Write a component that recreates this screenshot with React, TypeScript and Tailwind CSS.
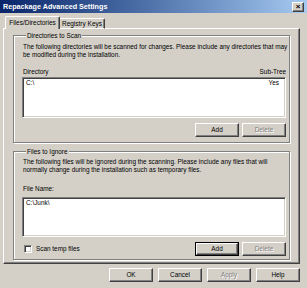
const raised =
  "border border-t-white border-l-white border-r-[#404040] border-b-[#404040] shadow-[inset_-1px_-1px_0_#808080]";
const sunken =
  "border border-t-[#808080] border-l-[#808080] border-b-white border-r-white shadow-[inset_1px_1px_0_#404040,inset_-1px_-1px_0_#d4d0c8]";

const Button = ({
  label,
  disabled,
  isDefault,
  className = "",
}: {
  label: string;
  disabled?: boolean;
  isDefault?: boolean;
  className?: string;
}) => {
  if (isDefault) {
    return (
      <div className={`border border-black ${className}`}>
        <div className={`h-full flex items-center justify-center ${raised}`}>
          {label}
        </div>
      </div>
    );
  }
  return (
    <div
      className={`flex items-center justify-center ${raised} ${
        disabled ? "text-[#808080] [text-shadow:1px_1px_0_#fff]" : "text-black"
      } ${className}`}
    >
      {label}
    </div>
  );
};

// etched group frame, caption sits on the top line
const GroupBox = ({
  title,
  children,
  className = "",
}: {
  title: string;
  children: React.ReactNode;
  className?: string;
}) => (
  <div
    className={`border border-[#808080] shadow-[1px_1px_0_#fff,inset_1px_1px_0_#fff] pl-[8px] pr-[3px] ${className}`}
  >
    <div className="-mt-[4px] ml-[4px] px-[1px] w-fit bg-[#d4d0c8] leading-[7px]">
      {title}
    </div>
    {children}
  </div>
);

export default function App() {
  return (
    <div
      className="w-[307px] h-[288px] bg-[#d4d0c8] flex flex-col overflow-hidden text-[6.4px] leading-[8px] text-black"
      style={{ fontFamily: '"Liberation Sans", Arial, sans-serif' }}
    >
      {/* title bar */}
      <div className="h-[13px] shrink-0 flex items-center justify-between bg-gradient-to-r from-[#0a246a] to-[#a6caf0] pl-[3px] pr-[3px]">
        <span className="text-white font-bold text-[7.2px]">
          Repackage Advanced Settings
        </span>
        <div
          className={`w-[12px] h-[10px] bg-[#d4d0c8] flex items-center justify-center ${raised} text-[8px] font-bold leading-none`}
        >
          ×
        </div>
      </div>

      {/* tabs */}
      <div className="flex items-end pl-[5px] mt-[3px] h-[13px] relative z-10">
        <div className="h-[13px] w-[55px] flex items-center justify-center bg-[#d4d0c8] border-t border-l border-white border-r border-r-[#404040] shadow-[inset_-1px_0_0_#808080] rounded-t-[2px] text-[6.5px]">
          Files/Directories
        </div>
        <div className="h-[11px] w-[45px] flex items-center justify-center border-t border-white border-r border-r-[#404040] shadow-[inset_-1px_0_0_#808080] rounded-tr-[2px] text-[6.5px] border-b border-b-white">
          Registry Keys
        </div>
      </div>

      {/* tab panel */}
      <div className={`ml-[3px] mr-[7px] h-[236px] shrink-0 -mt-px ${raised} px-[9px]`}>
        <GroupBox title="Directories to Scan" className="h-[108px] mt-[6px]">
          <p className="mt-[4px] pl-[1px] whitespace-nowrap">
            The following directories will be scanned for changes. Please include any directories that may
            <br />
            be modified during the installation.
          </p>
          <div className="flex justify-between mt-[9px] pl-[1px]">
            <span>Directory</span>
            <span>Sub-Tree</span>
          </div>
          <div className={`h-[41px] mt-px bg-white ${sunken} flex justify-between px-[3px] pt-[1px]`}>
            <span>C:\</span>
            <span className="pr-[3px]">Yes</span>
          </div>
          <div className="flex justify-end gap-[3px] mt-[5px]">
            <Button label="Add" className="w-[44px] h-[14px]" />
            <Button label="Delete" disabled className="w-[44px] h-[14px]" />
          </div>
        </GroupBox>

        <GroupBox title="Files to Ignore" className="h-[109px] mt-[8px]">
          <p className="mt-[3px] pl-[1px] whitespace-nowrap">
            The following files will be ignored during the scanning. Please include any files that will
            <br />
            normally change during the installation such as temporary files.
          </p>
          <div className="mt-[11px] pl-[1px]">File Name:</div>
          <div className={`h-[40px] mt-[4px] bg-white ${sunken} px-[3px] pt-[1px]`}>
            C:\Junk\
          </div>
          <div className="flex items-center justify-between mt-[5px]">
            <div className="flex items-center gap-[4px] pl-[2px]">
              <div className={`w-[8px] h-[8px] bg-white ${sunken}`} />
              <span>Scan temp files</span>
            </div>
            <div className="flex gap-[3px]">
              <Button label="Add" isDefault className="w-[44px] h-[14px]" />
              <Button label="Delete" disabled className="w-[44px] h-[14px]" />
            </div>
          </div>
        </GroupBox>
      </div>

      {/* dialog buttons */}
      <div className="flex justify-end gap-[5px] mr-[7px] mt-[4px]">
        <Button label="OK" className="w-[44px] h-[14px]" />
        <Button label="Cancel" className="w-[44px] h-[14px]" />
        <Button label="Apply" disabled className="w-[44px] h-[14px]" />
        <Button label="Help" className="w-[44px] h-[14px]" />
      </div>
    </div>
  );
}
